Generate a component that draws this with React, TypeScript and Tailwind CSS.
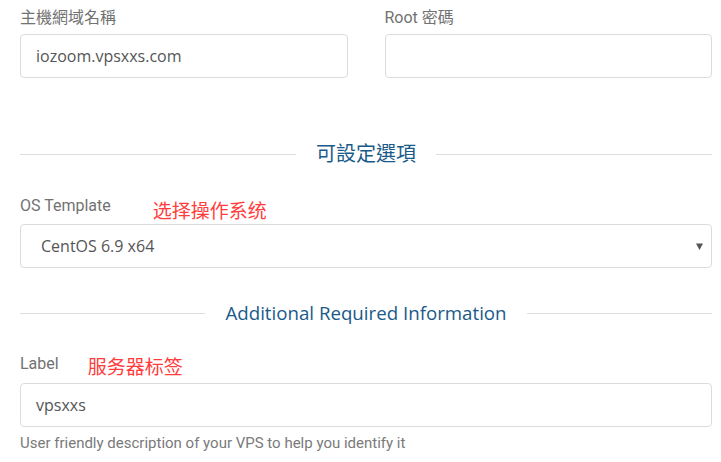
const labelFont = "[font-family:Roboto,'Noto_Sans_CJK_TC',sans-serif]";

const Field = ({ value }: { value?: string }) => (
  <div className="h-[44px] rounded-[4px] border border-[#dcdcdc] bg-white pl-[15px] flex items-center text-[16px] text-[#555] [font-family:'Open_Sans',sans-serif]">
    {value}
  </div>
);

const Divider = ({ title, size }: { title: string; size: string }) => (
  <div className="flex items-center h-[30px]">
    <div className="flex-1 h-px bg-[#dedede]" />
    <div className={`px-[20px] leading-[30px] text-[#1a5a8a] [font-family:'Open_Sans','Noto_Sans_CJK_TC',sans-serif] ${size}`}>
      {title}
    </div>
    <div className="flex-1 h-px bg-[#dedede]" />
  </div>
);

export default function App() {
  return (
    <div className="w-[721px] h-[462px] bg-white pl-[20px] pr-[9px] pt-[8px] overflow-hidden">
      <div className="grid grid-cols-2 gap-x-[37px]">
        <div>
          <div className={`h-[20px] mb-[6px] text-[16px] leading-[20px] text-[#727272] ${labelFont}`}>主機網域名稱</div>
          <Field value="iozoom.vpsxxs.com" />
        </div>
        <div>
          <div className={`h-[20px] mb-[6px] text-[16px] leading-[20px] text-[#727272] ${labelFont}`}>Root 密碼</div>
          <Field />
        </div>
      </div>

      <div className="mt-[61px]">
        <Divider title="可設定選項" size="text-[20px]" />
      </div>

      <div className="mt-[27px] flex items-start h-[26px] mb-[2px]">
        <span className={`text-[16px] leading-[20px] text-[#727272] ${labelFont}`}>OS Template</span>
        <span className="ml-[42px] mt-[2px] text-[19px] leading-[24px] text-[#ff3b3b] [font-family:'Noto_Sans_CJK_SC',sans-serif]">选择操作系统</span>
      </div>
      <div className="h-[44px] rounded-[4px] border border-[#dcdcdc] bg-white pl-[20px] pr-[8px] flex items-center justify-between text-[16px] text-[#555] [font-family:'Open_Sans',sans-serif]">
        <span>CentOS 6.9 x64</span>
        <svg width="7" height="7" viewBox="0 0 7 7">
          <polygon points="0,0.5 7,0.5 3.5,7" fill="#555" />
        </svg>
      </div>

      <div className="mt-[30px]">
        <Divider title="Additional Required Information" size="text-[18.7px]" />
      </div>

      <div className="mt-[26px] flex items-start h-[27px] mb-[2px]">
        <span className={`text-[16px] leading-[20px] text-[#727272] ${labelFont}`}>Label</span>
        <span className="ml-[29px] text-[19px] leading-[24px] text-[#ff3b3b] [font-family:'Noto_Sans_CJK_SC',sans-serif]">服务器标签</span>
      </div>
      <Field value="vpsxxs" />
      <div className="mt-[6px] text-[15px] leading-[20px] text-[#7a7a7a] [font-family:Roboto,sans-serif]">
        User friendly description of your VPS to help you identify it
      </div>
    </div>
  );
}
